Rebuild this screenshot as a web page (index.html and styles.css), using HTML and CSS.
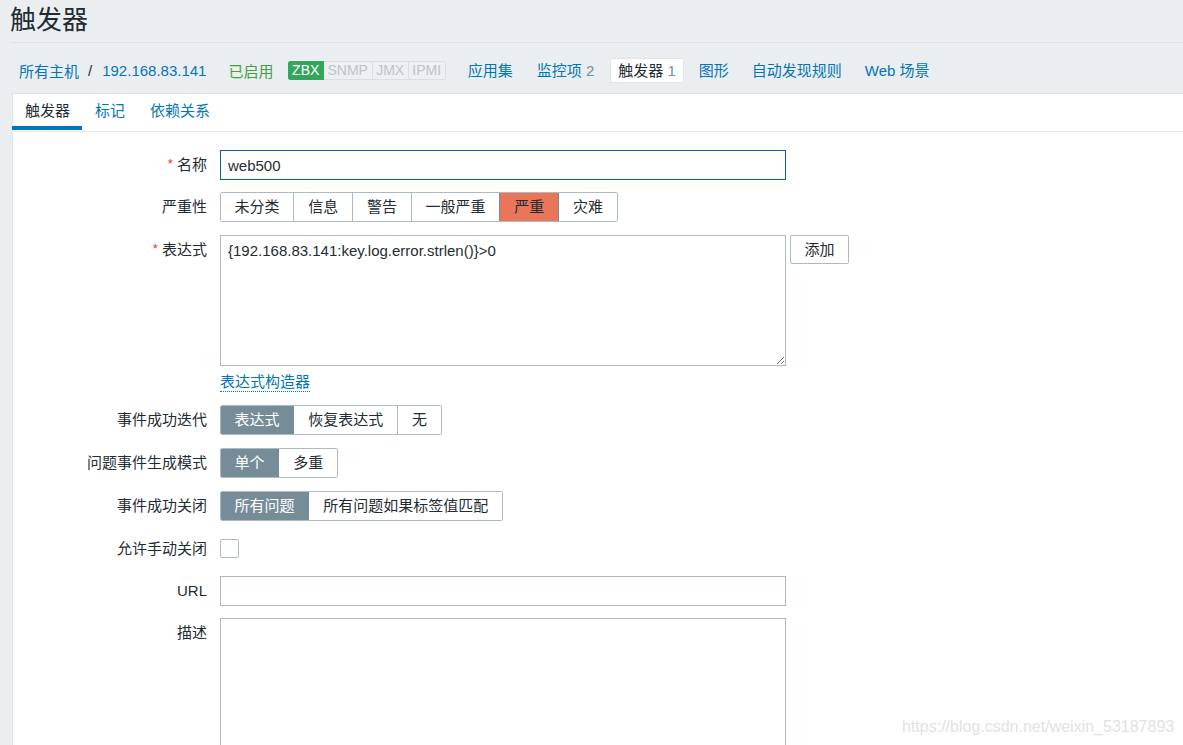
FILE: index.html
```html
<!DOCTYPE html>
<html lang="zh-CN">
<head>
<meta charset="utf-8">
<title>触发器</title>
<link rel="stylesheet" href="styles.css">
</head>
<body>
<header class="page-header">
  <h1 class="page-title">触发器</h1>
</header>
<nav class="host-nav">
  <a class="link crumb">所有主机</a>
  <span class="crumb-sep">/</span>
  <a class="link crumb">192.168.83.141</a>
  <span class="status-on">已启用</span>
  <span class="badges">
    <span class="badge badge-on">ZBX</span><span class="badge">SNMP</span><span class="badge">JMX</span><span class="badge">IPMI</span>
  </span>
  <span class="nav-items">
    <a class="nav-item link">应用集</a>
    <a class="nav-item link">监控项 <span class="count">2</span></a>
    <span class="nav-item nav-active">触发器 <span class="count">1</span></span>
    <a class="nav-item link">图形</a>
    <a class="nav-item link">自动发现规则</a>
    <a class="nav-item link">Web 场景</a>
  </span>
</nav>
<main class="panel">
  <div class="tabs">
    <span class="tab tab-active">触发器</span>
    <a class="tab link">标记</a>
    <a class="tab link">依赖关系</a>
  </div>
  <form class="form">
    <div class="row row-name">
      <label class="lbl"><span class="req">*</span> 名称</label>
      <input class="text focus" type="text" value="web500">
    </div>
    <div class="row">
      <span class="lbl">严重性</span>
      <div class="seg">
        <span class="seg-btn">未分类</span><span class="seg-btn">信息</span><span class="seg-btn">警告</span><span class="seg-btn">一般严重</span><span class="seg-btn sev-on">严重</span><span class="seg-btn">灾难</span>
      </div>
    </div>
    <div class="row row-expr">
      <label class="lbl"><span class="req">*</span> 表达式</label>
      <textarea class="area expr-area">{192.168.83.141:key.log.error.strlen()}>0</textarea>
      <span class="btn">添加</span>
    </div>
    <div class="row row-link">
      <span class="lbl"></span>
      <a class="dotted link">表达式构造器</a>
    </div>
    <div class="row">
      <span class="lbl">事件成功迭代</span>
      <div class="seg">
        <span class="seg-btn on">表达式</span><span class="seg-btn">恢复表达式</span><span class="seg-btn">无</span>
      </div>
    </div>
    <div class="row">
      <span class="lbl">问题事件生成模式</span>
      <div class="seg">
        <span class="seg-btn on">单个</span><span class="seg-btn">多重</span>
      </div>
    </div>
    <div class="row">
      <span class="lbl">事件成功关闭</span>
      <div class="seg">
        <span class="seg-btn on">所有问题</span><span class="seg-btn">所有问题如果标签值匹配</span>
      </div>
    </div>
    <div class="row row-check">
      <span class="lbl">允许手动关闭</span>
      <span class="checkbox"></span>
    </div>
    <div class="row row-url">
      <label class="lbl">URL</label>
      <input class="text" type="text" value="">
    </div>
    <div class="row">
      <label class="lbl">描述</label>
      <textarea class="area desc-area"></textarea>
    </div>
  </form>
  <div class="watermark">https://blog.csdn.net/weixin_53187893</div>
</main>
</body>
</html>
```
FILE: styles.css
```css
html, body {
  margin: 0;
  padding: 0;
}
body {
  background: #ebeef0;
  color: #1f2c33;
  font-family: "Liberation Sans", "Noto Sans CJK SC", sans-serif;
  font-size: 15px;
  overflow: hidden;
  height: 745px;
}
.link {
  color: #0275b8;
  text-decoration: none;
}
.page-header {
  margin-left: 10px;
  border-bottom: 1px solid #dde2e5;
  height: 42px;
}
.page-title {
  margin: 0;
  font-size: 26px;
  font-weight: normal;
  line-height: 40px;
  height: 42px;
  color: #1f2c33;
}
.host-nav {
  display: flex;
  align-items: center;
  height: 25px;
  margin: 15px 0 10px;
  padding-left: 19px;
  white-space: nowrap;
}
.crumb-sep {
  margin: 0 10px 0 9px;
  color: #1f2c33;
}
.status-on {
  color: #429e47;
  margin-left: 22px;
}
.badges {
  display: flex;
  margin-left: 15px;
  border-radius: 2px;
  overflow: hidden;
}
.badge {
  font-size: 14px;
  line-height: 17px;
  padding: 0 3.6px;
  border: 1px solid #d9dee1;
  border-left: none;
  background: #edf0f2;
  color: #bcc4c9;
}
.badge:last-child {
  border-radius: 0 2px 2px 0;
}
.badge-on {
  background: #34a65c;
  border-color: #34a65c;
  color: #fff;
  border-radius: 2px 0 0 2px;
}
.nav-items {
  display: flex;
  align-items: center;
  margin-left: 14px;
  gap: 8px;
}
.nav-item {
  padding: 0 7px;
  line-height: 23px;
  height: 23px;
  border: 1px solid transparent;
  border-radius: 2px;
}
.nav-item:nth-child(n+4) {
  margin-left: -1px;
}
.nav-active {
  background: #fff;
  border-color: #e1e5e8;
  color: #1f2c33;
}
.count {
  color: #768d99;
}
.panel {
  position: relative;
  margin-left: 12px;
  background: #fff;
  border-top: 1px solid #dfe4e7;
  border-left: 1px solid #dfe4e7;
  height: 700px;
}
.tabs {
  display: flex;
  border-bottom: 1px solid #e6e9eb;
  height: 37px;
}
.tab {
  padding: 7px 12px 5px 13px;
  line-height: 20px;
  height: 20px;
  border-bottom: 4px solid transparent;
  margin-left: -1px;
}
.tab + .tab {
  margin-left: 0;
}
.tab-active {
  border-bottom-color: #0275b8;
  color: #1f2c33;
}
.form {
  padding-top: 18px;
}
.row {
  display: flex;
  align-items: flex-start;
  margin-bottom: 13px;
}
.row-name {
  margin-bottom: 12px;
}
.lbl {
  width: 194px;
  height: 30px;
  flex: none;
  text-align: right;
  line-height: 30px;
  margin-right: 13px;
  white-space: nowrap;
  overflow: visible;
}
.req {
  color: #e33734;
  font-size: 13px;
  position: relative;
  top: -2px;
}
.text {
  box-sizing: border-box;
  width: 566px;
  height: 30px;
  border: 1px solid #acbbc2;
  padding: 0 7px;
  font: inherit;
  color: #1f2c33;
  outline: none;
  margin: 0;
}
.text.focus {
  border-color: #0d629b;
}
.area {
  box-sizing: border-box;
  width: 566px;
  border: 1px solid #acbbc2;
  padding: 5px 7px;
  font: inherit;
  line-height: 19px;
  color: #1f2c33;
  margin: 0;
  outline: none;
  resize: both;
}
.expr-area {
  height: 131px;
}
.desc-area {
  height: 140px;
}
.btn {
  box-sizing: border-box;
  margin-left: 4px;
  width: 59px;
  height: 29px;
  line-height: 27px;
  text-align: center;
  border: 1px solid #acbbc2;
  border-radius: 2px;
  background: #fff;
}
.row-expr {
  margin-bottom: 6px;
}
.row-link {
  margin-bottom: 13px;
  height: 20px;
}
.row-link .lbl {
  line-height: 20px;
  height: 20px;
}
.dotted {
  box-sizing: border-box;
  line-height: 19px;
  border-bottom: 1px dotted #0275b8;
  height: 20px;
}
.seg {
  display: flex;
  height: 30px;
  box-sizing: border-box;
  border: 1px solid #acbbc2;
  border-radius: 2px;
  overflow: hidden;
}
.seg-btn {
  padding: 0 13.85px;
  line-height: 28px;
  height: 28px;
  background: #fff;
  white-space: nowrap;
}
.seg-btn:first-child {
  padding-left: 13.5px;
}
.seg-btn + .seg-btn {
  border-left: 1px solid #acbbc2;
}
.seg-btn.on {
  background: #768d99;
  color: #fff;
}
.seg-btn.on + .seg-btn {
  border-left-color: #768d99;
}
.seg-btn.sev-on {
  background: #e97659;
  border-left-color: #768d99;
}
.seg-btn.sev-on + .seg-btn {
  border-left-color: #768d99;
}
.row-check {
  height: 29px;
  align-items: center;
}
.row-check .lbl {
  line-height: 29px;
  height: 29px;
}
.checkbox {
  box-sizing: border-box;
  width: 19px;
  height: 19px;
  border: 1px solid #acbbc2;
  border-radius: 2px;
  background: #fff;
}
.row-url {
  margin-bottom: 12px;
}
.watermark {
  position: absolute;
  left: 889px;
  top: 624px;
  font-size: 16px;
  color: #e2e2e2;
  white-space: nowrap;
}
```
